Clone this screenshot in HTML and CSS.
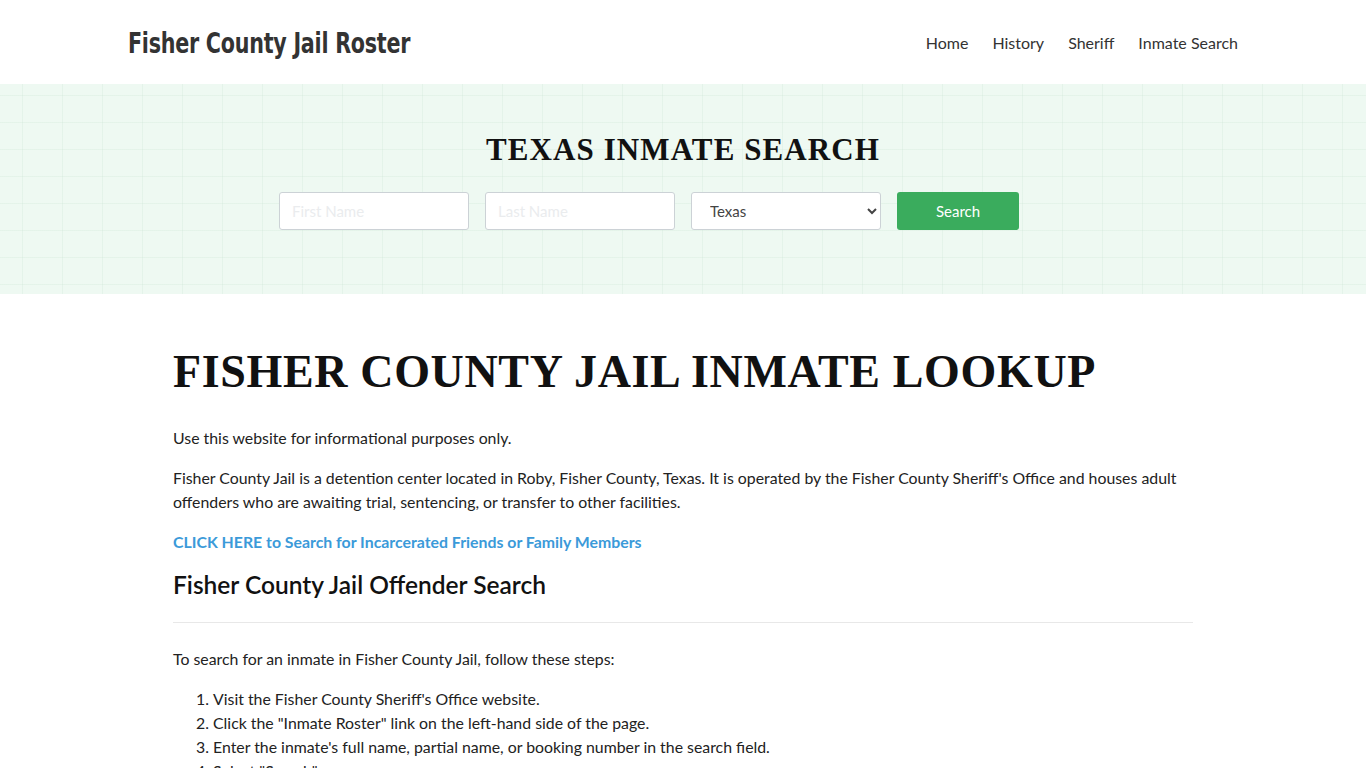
FILE: index.html
```html
<!DOCTYPE html>
<html lang="en">
<head>
<meta charset="utf-8">
<title>Fisher County Jail Roster</title>
<link rel="stylesheet" href="styles.css">
</head>
<body>
<header class="site-header">
  <div class="container header-inner">
    <a class="logo" href="#">Fisher County Jail Roster</a>
    <nav class="nav">
      <a href="#">Home</a>
      <a href="#">History</a>
      <a href="#">Sheriff</a>
      <a href="#">Inmate Search</a>
    </nav>
  </div>
</header>
<section class="hero">
  <h2 class="hero-title">TEXAS INMATE SEARCH</h2>
  <div class="form-wrap">
    <form class="search-form">
      <input class="field" type="text" placeholder="First Name">
      <input class="field" type="text" placeholder="Last Name">
      <select class="field select">
        <option>Texas</option>
      </select>
      <button class="btn" type="button">Search</button>
    </form>
  </div>
</section>
<main class="content">
  <h1 class="page-title">FISHER COUNTY JAIL INMATE LOOKUP</h1>
  <p>Use this website for informational purposes only.</p>
  <p>Fisher County Jail is a detention center located in Roby, Fisher County, Texas. It is operated by the Fisher County Sheriff's Office and houses adult offenders who are awaiting trial, sentencing, or transfer to other facilities.</p>
  <p><a class="cta" href="#">CLICK HERE to Search for Incarcerated Friends or Family Members</a></p>
  <h2 class="section-title">Fisher County Jail Offender Search</h2>
  <hr class="rule">
  <p>To search for an inmate in Fisher County Jail, follow these steps:</p>
  <ol class="steps">
    <li>Visit the Fisher County Sheriff's Office website.</li>
    <li>Click the "Inmate Roster" link on the left-hand side of the page.</li>
    <li>Enter the inmate's full name, partial name, or booking number in the search field.</li>
    <li>Select "Search".</li>
  </ol>
</main>
</body>
</html>
```
FILE: styles.css
```css
* { box-sizing: border-box; }
html, body { margin: 0; padding: 0; }
body {
  font-family: Lato, "Open Sans", Arial, sans-serif;
  font-size: 15.85px;
  line-height: 24px;
  color: #222;
  background: #fff;
}
a { text-decoration: none; }
.container {
  width: 1110px;
  margin: 0 auto;
}
.site-header {
  height: 84px;
  background: #fff;
}
.header-inner {
  height: 84px;
  display: flex;
  align-items: center;
  justify-content: space-between;
}
.logo {
  display: inline-block;
  font-family: "DejaVu Sans Condensed", "DejaVu Sans", sans-serif;
  font-stretch: condensed;
  font-weight: bold;
  font-size: 28px;
  color: #333;
  letter-spacing: -0.3px;
  transform: scaleX(0.82);
  transform-origin: left center;
  margin-top: 3px;
}
.nav {
  display: flex;
  gap: 24px;
  margin-top: 2px;
}
.nav a {
  font-size: 16px;
  color: #333;
}
.hero {
  height: 210px;
  background-color: #eef9f2;
  background-image:
    linear-gradient(to right, rgba(200,225,210,0.25) 1px, transparent 1px),
    linear-gradient(to bottom, rgba(200,225,210,0.25) 1px, transparent 1px);
  background-size: 40px 27px;
  background-position: 22px 11px;
  padding-top: 48px;
}
.hero-title {
  margin: 0;
  text-align: center;
  font-family: "Liberation Serif", "Times New Roman", serif;
  font-weight: bold;
  font-size: 31px;
  line-height: 36px;
  letter-spacing: 1.1px;
  color: #111;
}
.form-wrap {
  width: 808px;
  margin: 24px auto 0;
}
.search-form {
  display: flex;
  gap: 16px;
}
.field {
  width: 190px;
  height: 38px;
  border: 1px solid #ccd2d6;
  border-radius: 3px;
  background: #fff;
  padding: 0 12px;
  font-family: Lato, sans-serif;
  font-size: 15px;
  color: #444;
}
.field::placeholder { color: #eaecee; }
.select {
  padding: 0 8px 0 14px;
}
.btn {
  width: 122px;
  height: 38px;
  border: 0;
  border-radius: 3px;
  background: #3aac5d;
  color: #fff;
  font-family: Lato, sans-serif;
  font-size: 15px;
}
.content {
  width: 1020px;
  margin: 0 auto;
  padding-top: 52px;
}
.page-title {
  margin: 0 0 28px;
  font-family: "Liberation Serif", "Times New Roman", serif;
  font-weight: bold;
  font-size: 46px;
  line-height: 52px;
  letter-spacing: 0.65px;
  color: #111;
}
.content p {
  margin: 0 0 16px;
}
.cta {
  color: #3b9ad9;
  font-weight: bold;
}
.section-title {
  margin: 0;
  font-family: Lato, sans-serif;
  font-weight: 600;
  font-size: 24.5px;
  line-height: 30px;
  color: #111;
}
.rule {
  border: 0;
  border-top: 1px solid #e8e8e8;
  margin: 22px 0 24px;
}
.steps {
  margin: 0;
  padding-left: 40px;
}
```
